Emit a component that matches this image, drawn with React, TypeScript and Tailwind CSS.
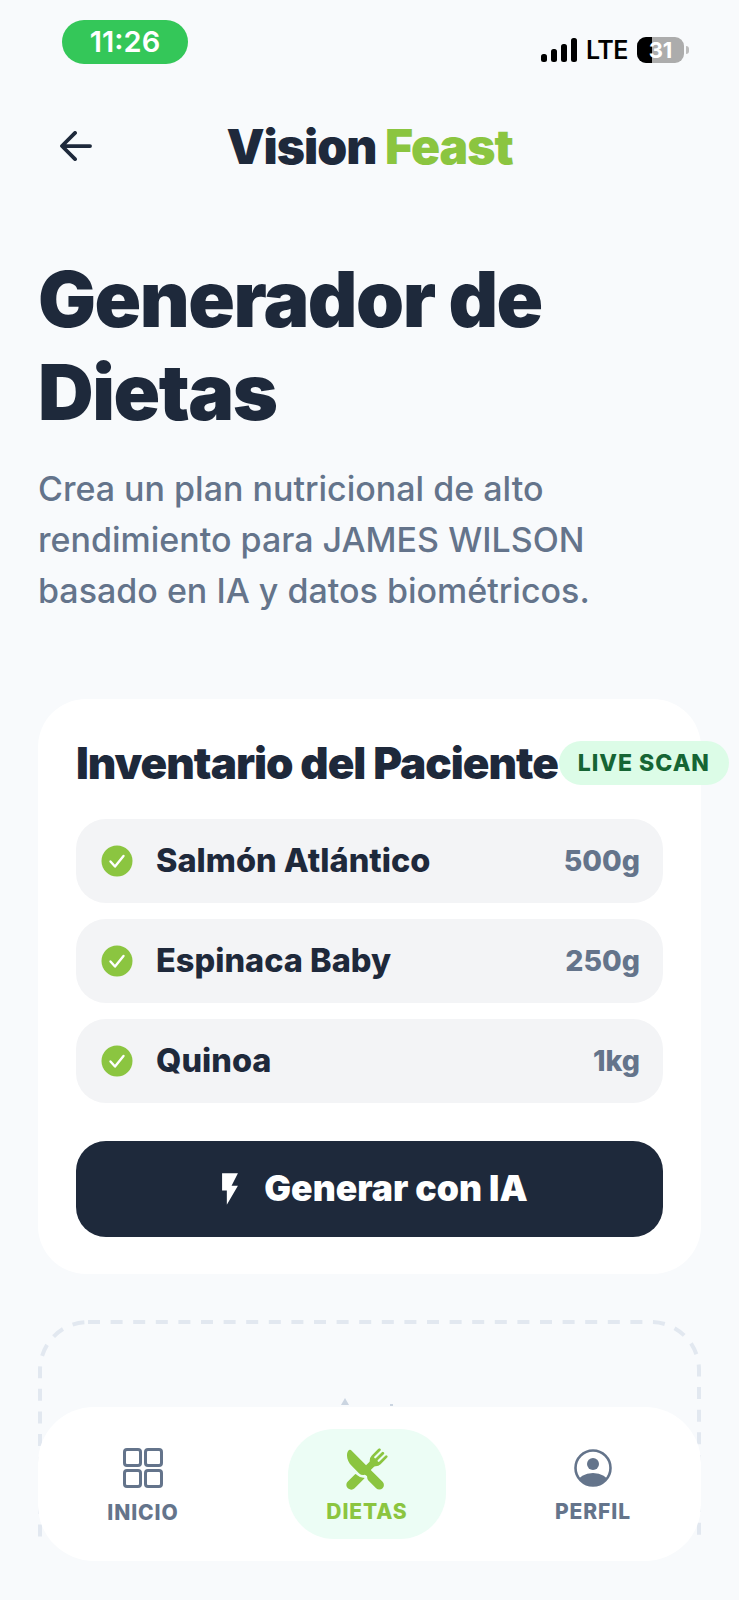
import { IoRestaurant } from 'react-icons/io5'
import { MdFlashOn } from 'react-icons/md'

const items = [
  { name: 'Salmón Atlántico', qty: '500g' },
  { name: 'Espinaca Baby', qty: '250g' },
  { name: 'Quinoa', qty: '1kg' },
]

function CheckDot() {
  return (
    <svg width="32" height="32" viewBox="0 0 32 32" className="shrink-0">
      <circle cx="16" cy="16" r="15.5" fill="#8bc540" />
      <path d="M9.5 16.5l4.5 5 8.5-10.5" fill="none" stroke="#fff" strokeWidth="2.4" strokeLinecap="round" strokeLinejoin="round" />
    </svg>
  )
}

function StatusBar() {
  return (
    <div className="flex h-[99px] items-start justify-between pl-[62px] pr-[50px] pt-5">
      <div className="flex h-11 w-[126px] items-center justify-center rounded-full bg-[#34c759] text-[29px] font-semibold text-white">
        11:26
      </div>
      <div className="mt-[17px] flex items-center">
        <svg width="36" height="24" viewBox="0 0 36 24" fill="#000">
          <rect x="0" y="16" width="6" height="8" rx="2.5" />
          <rect x="10" y="11" width="6" height="13" rx="2.5" />
          <rect x="20" y="6" width="6" height="18" rx="2.5" />
          <rect x="30" y="0" width="6" height="24" rx="2.5" />
        </svg>
        <span className="ml-[9px] text-[25px] leading-none font-semibold tracking-[-0.5px] text-black">LTE</span>
        <div className="relative ml-[9px] flex h-[26px] w-[47px] items-center justify-center overflow-hidden rounded-[9px] bg-[#acacac] text-[22px] font-bold text-white">
          <div className="absolute inset-y-0 left-0 w-[15px] bg-black" />
          <span className="relative">31</span>
        </div>
        <div className="ml-[2px] h-2 w-[3px] rounded-r-full bg-[#bdbdbd]" />
      </div>
    </div>
  )
}

export default function App() {
  return (
    <div className="relative h-[1600px] w-[739px] overflow-hidden bg-[#f8fafc] font-['Inter',sans-serif] text-[#1e293b]">
      <div className="h-[1540px] overflow-hidden">
        <StatusBar />

        <header className="relative flex h-[96px] items-center justify-center">
          <svg width="32" height="30" viewBox="0 0 34 32" className="absolute left-[60px] top-[32px]" fill="none" stroke="#1e293b" strokeWidth="4" strokeLinecap="round" strokeLinejoin="round">
            <path d="M32 16H3M16 2L2 16l14 14" />
          </svg>
          <h2 className="text-[48px] leading-none font-black tracking-[-1px]">
            Vision <span className="text-[#8bc540]">Feast</span>
          </h2>
        </header>

        <section className="px-[38px] pt-[58px]">
          <h1 className="text-[77px] leading-[93px] font-black tracking-[-1.5px]">Generador de Dietas</h1>
          <p className="mt-[24px] w-[600px] text-[34px] leading-[51px] font-medium text-[#64748b]">
            Crea un plan nutricional de alto rendimiento para JAMES WILSON basado en IA y datos biométricos.
          </p>
        </section>

        <section className="mx-[38px] mt-[83px] rounded-[48px] bg-white px-[38px] pt-[42px] pb-[37px]">
          <div className="flex h-[44px] items-center whitespace-nowrap">
            <h3 className="text-[44px] leading-none font-black tracking-[-1px]">Inventario del Paciente</h3>
            <span className="ml-px flex h-[44px] w-[170px] shrink-0 items-center justify-center rounded-full bg-[#dcfce7] text-[23px] font-extrabold tracking-[1px] text-[#166534]">
              LIVE SCAN
            </span>
          </div>

          <ul className="mt-[34px] flex flex-col gap-4">
            {items.map((item) => (
              <li key={item.name} className="flex h-[84px] items-center justify-between rounded-[30px] bg-[#f3f4f6] pl-[25px] pr-[23px]">
                <div className="flex items-center gap-[23px]">
                  <CheckDot />
                  <span className="text-[32.5px] font-extrabold">{item.name}</span>
                </div>
                <span className="text-[28.5px] font-extrabold text-[#64748b]">{item.qty}</span>
              </li>
            ))}
          </ul>

          <button type="button" className="mt-[38px] flex h-[96px] w-full items-center justify-center gap-[15px] rounded-[30px] bg-[#1e293b] text-[35.5px] font-black text-white">
            <MdFlashOn size={38} />
            Generar con IA
          </button>
        </section>

        <section className="relative mx-[38px] mt-[46px] h-[400px]">
          <svg className="absolute inset-0 h-full w-full" fill="none">
            <rect x="2" y="2" width="659" height="396" rx="48" stroke="#e2e8f0" strokeWidth="4" strokeDasharray="12 10.6" />
          </svg>
          <div className="flex justify-center pt-[78px]">
            <svg width="60" height="12" viewBox="0 0 60 12" fill="#cbd5e1">
              <path d="M5 0l4 7H1z" />
              <path d="M50 6h3v2h-3z" />
            </svg>
          </div>
        </section>
      </div>

      <nav className="absolute bottom-[39px] left-[38px] flex h-[154px] w-[663px] items-center rounded-[56px] bg-white">
        <div className="ml-[69px] mt-[5px] flex w-[72px] flex-col items-center">
          <svg width="40" height="40" viewBox="0 0 40 40" fill="none" stroke="#64748b" strokeWidth="3">
            <rect x="1.5" y="1.5" width="16" height="16" rx="2.5" />
            <rect x="22.5" y="1.5" width="16" height="16" rx="2.5" />
            <rect x="1.5" y="22.5" width="16" height="16" rx="2.5" />
            <rect x="22.5" y="22.5" width="16" height="16" rx="2.5" />
          </svg>
          <span className="mt-[12px] text-[21px] leading-[26px] font-extrabold tracking-[0.9px] text-[#64748b]">INICIO</span>
        </div>
        <div className="ml-[109px] flex h-[110px] w-[158px] flex-col items-center justify-center rounded-[46px] bg-[#ecfdf5] pt-[4px]">
          <IoRestaurant size={44} color="#8bc540" />
          <span className="mt-[8px] text-[21px] leading-[26px] font-extrabold tracking-[0.9px] text-[#8bc540]">DIETAS</span>
        </div>
        <div className="ml-[109px] mt-[5px] flex w-[76px] flex-col items-center">
          <svg width="38" height="38" viewBox="0 0 38 38">
            <defs>
              <clipPath id="perfil">
                <circle cx="19" cy="19" r="17" />
              </clipPath>
            </defs>
            <circle cx="19" cy="15" r="6" fill="#64748b" />
            <ellipse cx="19" cy="33" rx="15" ry="9" fill="#64748b" clipPath="url(#perfil)" />
            <circle cx="19" cy="19" r="17.5" fill="none" stroke="#64748b" strokeWidth="2.6" />
          </svg>
          <span className="mt-[12px] text-[21px] leading-[26px] font-extrabold tracking-[0.9px] text-[#64748b]">PERFIL</span>
        </div>
      </nav>
    </div>
  )
}
